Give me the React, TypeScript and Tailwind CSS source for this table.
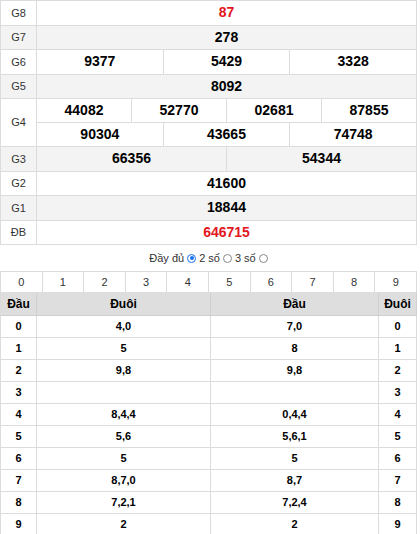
import React from "react"

const font = { fontFamily: '"Liberation Sans", Arial, sans-serif' }

// prize rows, G4 handled separately
type Row = { label: string; values: string[]; red?: boolean; gray?: boolean }

const topRows: Row[] = [
  { label: "G8", values: ["87"], red: true },
  { label: "G7", values: ["278"], gray: true },
  { label: "G6", values: ["9377", "5429", "3328"] },
  { label: "G5", values: ["8092"], gray: true },
]

const bottomRows: Row[] = [
  { label: "G3", values: ["66356", "54344"], gray: true },
  { label: "G2", values: ["41600"] },
  { label: "G1", values: ["18844"], gray: true },
  { label: "ĐB", values: ["646715"], red: true },
]

const heads = ["4,0", "5", "9,8", "", "8,4,4", "5,6", "5", "8,7,0", "7,2,1", "2"]
const tails = ["7,0", "8", "9,8", "", "0,4,4", "5,6,1", "5", "8,7", "7,2,4", "2"]

function PrizeRow({ row }: { row: Row }) {
  const cols =
    row.values.length === 3 ? "grid-cols-3" : row.values.length === 2 ? "grid-cols-2" : "grid-cols-1"
  return (
    <div className={`grid grid-cols-[36px_1fr] h-[24.5px] ${row.gray ? "bg-[#f3f3f3]" : "bg-white"}`}>
      <div className="flex items-center justify-center border-r border-b border-[#dcdcdc] text-[11px] text-[#333]">
        {row.label}
      </div>
      <div className={`grid ${cols}`}>
        {row.values.map((v, i) => (
          <div
            key={i}
            className={`flex items-center justify-center border-r border-b border-[#dcdcdc] text-[14px] font-bold ${
              row.red ? "text-[#e3161c]" : "text-black"
            }`}
          >
            {v}
          </div>
        ))}
      </div>
    </div>
  )
}

function Radio({ checked }: { checked?: boolean }) {
  return checked ? (
    <span className="inline-flex items-center justify-center w-[9px] h-[9px] rounded-full border-[1.5px] border-[#1a73e8] mx-[3px]">
      <span className="w-[4px] h-[4px] rounded-full bg-[#1a73e8]" />
    </span>
  ) : (
    <span className="inline-block w-[9px] h-[9px] rounded-full border border-[#888] bg-white mx-[3px]" />
  )
}

export default function App() {
  return (
    <div className="w-[420px] h-[534px] overflow-hidden bg-white" style={font}>
      {/* prize table */}
      <div className="w-[417px] border-l border-t border-[#dcdcdc]">
        {topRows.map((r) => (
          <PrizeRow key={r.label} row={r} />
        ))}
        <div className="grid grid-cols-[36px_1fr] bg-white">
          <div className="flex items-center justify-center border-r border-b border-[#dcdcdc] text-[11px] text-[#333]">
            G4
          </div>
          <div>
            <div className="grid grid-cols-4 h-[24px]">
              {["44082", "52770", "02681", "87855"].map((v) => (
                <div
                  key={v}
                  className="flex items-center justify-center border-r border-b border-[#dcdcdc] text-[14px] font-bold"
                >
                  {v}
                </div>
              ))}
            </div>
            <div className="grid grid-cols-3 h-[24px]">
              {["90304", "43665", "74748"].map((v) => (
                <div
                  key={v}
                  className="flex items-center justify-center border-r border-b border-[#dcdcdc] text-[14px] font-bold"
                >
                  {v}
                </div>
              ))}
            </div>
          </div>
        </div>
        {bottomRows.map((r) => (
          <PrizeRow key={r.label} row={r} />
        ))}
      </div>

      {/* display options */}
      <div className="h-[26px] flex items-center justify-center text-[11px] text-[#333]">
        <span>Đầy đủ</span>
        <Radio checked />
        <span>2 số</span>
        <Radio />
        <span>3 số</span>
        <Radio />
      </div>

      {/* digit filter */}
      <div className="w-[417px] border-l border-t border-[#dcdcdc] grid grid-cols-10 h-[22px]">
        {Array.from({ length: 10 }, (_, i) => (
          <div
            key={i}
            className="flex items-center justify-center border-r border-b border-[#dcdcdc] text-[11px] text-[#333]"
          >
            {i}
          </div>
        ))}
      </div>

      {/* head / tail table */}
      <div className="w-[417px] border-l border-[#dcdcdc]">
        <div className="grid grid-cols-[36px_174px_168px_38px] h-[23px] bg-[#dedede] text-[12px] font-bold text-black">
          <div className="flex items-center justify-center border-r border-b border-[#d0d0d0]">Đầu</div>
          <div className="flex items-center justify-center border-r border-b border-[#d0d0d0]">Đuôi</div>
          <div className="flex items-center justify-center border-r border-b border-[#d0d0d0]">Đầu</div>
          <div className="flex items-center justify-center border-r border-b border-[#d0d0d0]">Đuôi</div>
        </div>
        {heads.map((h, i) => (
          <div
            key={i}
            className="grid grid-cols-[36px_174px_168px_38px] h-[22px] text-[11px] font-bold text-black"
          >
            <div className="flex items-center justify-center border-r border-b border-[#dcdcdc]">{i}</div>
            <div className="flex items-center justify-center border-r border-b border-[#dcdcdc]">{h}</div>
            <div className="flex items-center justify-center border-r border-b border-[#dcdcdc]">{tails[i]}</div>
            <div className="flex items-center justify-center border-r border-b border-[#dcdcdc]">{i}</div>
          </div>
        ))}
      </div>
    </div>
  )
}
